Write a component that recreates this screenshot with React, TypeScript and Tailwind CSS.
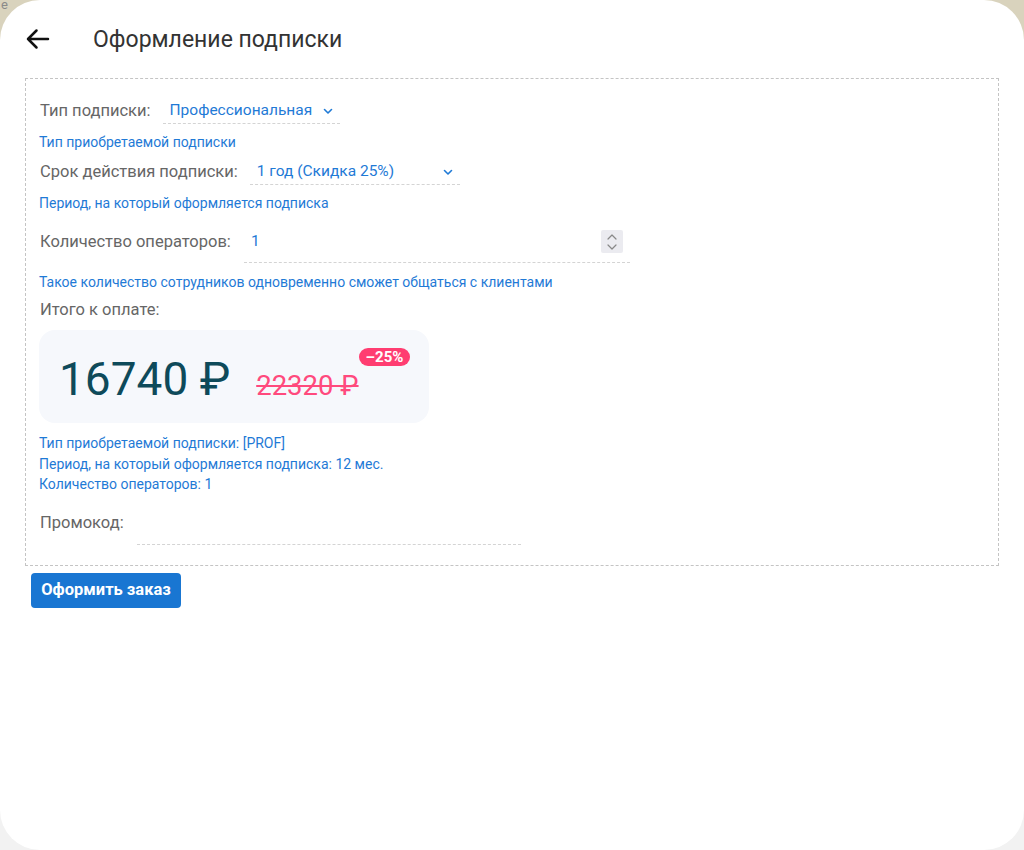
import React from "react";

const Chevron = () => (
  <svg width="10" height="7" viewBox="0 0 10 7" fill="none" className="shrink-0">
    <path d="M1.5 1.5L5 5L8.5 1.5" stroke="#1f7ad6" strokeWidth="1.6" strokeLinecap="round" strokeLinejoin="round" />
  </svg>
);

export default function App() {
  return (
    <div
      className="relative h-[850px] w-full overflow-hidden bg-[#f2f2f2]"
      style={{ fontFamily: "Roboto, 'Noto Sans', sans-serif" }}
    >
      <div className="absolute inset-x-0 top-0 h-[120px] bg-[#d9d3bd]" />
      <span className="absolute left-[1px] top-[-5px] text-[13px] text-[#8a8a8a]">e</span>
      <div className="relative h-full w-full rounded-[40px] bg-white">
        <div className="flex h-[78px] items-center pl-[25px]">
          <svg width="25" height="24" viewBox="0 0 25 24" fill="none">
            <path d="M23 12H3M11.5 3.5L3 12L11.5 20.5" stroke="#111" strokeWidth="2.5" strokeLinecap="round" strokeLinejoin="round" />
          </svg>
          <div className="ml-[43px] pt-[3px] text-[23px] text-[#333]">Оформление подписки</div>
        </div>

        <div className="mx-[25px] border border-dashed border-[#c4c4c4] pb-[20px] pl-[13px]">
          {/* Row 1 */}
          <div className="mt-[19px] flex h-[24px] items-center pt-[3px]">
            <span className="pl-[1px] text-[16.5px] text-[#666]">Тип подписки:</span>
            <div className="ml-[12px] flex h-[24px] w-[177px] items-center justify-between border-b border-dashed border-[#d4d4d4] pl-[7px] pr-[7px]">
              <span className="text-[15.5px] text-[#1f7ad6]">Профессиональная</span>
              <Chevron />
            </div>
          </div>
          <div className="mt-[12px] text-[14px] leading-[16px] text-[#1f7ad6]">Тип приобретаемой подписки</div>

          {/* Row 2 */}
          <div className="mt-[9px] flex h-[24px] items-center pt-[3px]">
            <span className="pl-[1px] text-[16.5px] text-[#666]">Срок действия подписки:</span>
            <div className="ml-[12px] flex h-[24px] w-[210px] items-center justify-between border-b border-dashed border-[#d4d4d4] pl-[7px] pr-[7px]">
              <span className="text-[15.5px] text-[#1f7ad6]">1 год (Скидка 25%)</span>
              <Chevron />
            </div>
          </div>
          <div className="mt-[12px] text-[14px] leading-[16px] text-[#1f7ad6]">Период, на который оформляется подписка</div>

          {/* Row 3 */}
          <div className="mt-[10px] flex h-[42px] items-center">
            <span className="pl-[1px] text-[16.5px] text-[#666]">Количество операторов:</span>
            <div className="ml-[13px] flex h-[42px] w-[386px] items-center justify-between border-b border-dashed border-[#d4d4d4] pl-[7px] pr-[7px]">
              <span className="text-[15.5px] text-[#1f7ad6]">1</span>
              <div className="flex h-[23px] w-[22px] flex-col items-center justify-center gap-[4px] rounded-[2px] bg-[#ebebf0]">
                <svg width="10" height="6" viewBox="0 0 10 6" fill="none">
                  <path d="M1 5L5 1L9 5" stroke="#888" strokeWidth="1.2" strokeLinecap="round" strokeLinejoin="round" />
                </svg>
                <svg width="10" height="6" viewBox="0 0 10 6" fill="none">
                  <path d="M1 1L5 5L9 1" stroke="#888" strokeWidth="1.2" strokeLinecap="round" strokeLinejoin="round" />
                </svg>
              </div>
            </div>
          </div>
          <div className="mt-[11px] text-[14px] leading-[16px] text-[#1f7ad6]">
            Такое количество сотрудников одновременно сможет общаться с клиентами
          </div>

          <div className="mt-[10px] pl-[1px] text-[16.5px] leading-[20px] text-[#666]">Итого к оплате:</div>

          {/* Price box */}
          <div className="relative mt-[10px] flex h-[93px] w-[390px] items-center rounded-[16px] bg-[#f6f8fc] pl-[20px]">
            <div className="flex items-baseline pt-[4px]">
              <span className="text-[46px] leading-[54px] text-[#0e4a5a]">16740 ₽</span>
              <span className="ml-[26px] text-[27.5px] leading-[30px] text-[#ff4a7d] line-through decoration-[1.5px]">22320 ₽</span>
            </div>
            <span className="absolute left-[320px] top-[18px] flex h-[18px] w-[51px] items-center justify-center rounded-full bg-[#ff3d71] text-[15px] font-bold leading-none text-white">
              –25%
            </span>
          </div>

          <div className="mt-[10px] text-[14px] leading-[20.5px] text-[#1f7ad6]">
            <div>Тип приобретаемой подписки: [PROF]</div>
            <div>Период, на который оформляется подписка: 12 мес.</div>
            <div>Количество операторов: 1</div>
          </div>

          <div className="mt-[8px] flex h-[42px] items-center">
            <span className="pl-[1px] text-[16.5px] text-[#666]">Промокод:</span>
            <div className="ml-[13px] h-[42px] w-[384px] border-b border-dashed border-[#d4d4d4]" />
          </div>
        </div>

        <button className="ml-[31px] mt-[7px] flex h-[35px] w-[150px] items-center justify-center rounded-[4px] bg-[#1976d2] text-[16.5px] font-bold text-white">
          Оформить заказ
        </button>
      </div>
    </div>
  );
}
